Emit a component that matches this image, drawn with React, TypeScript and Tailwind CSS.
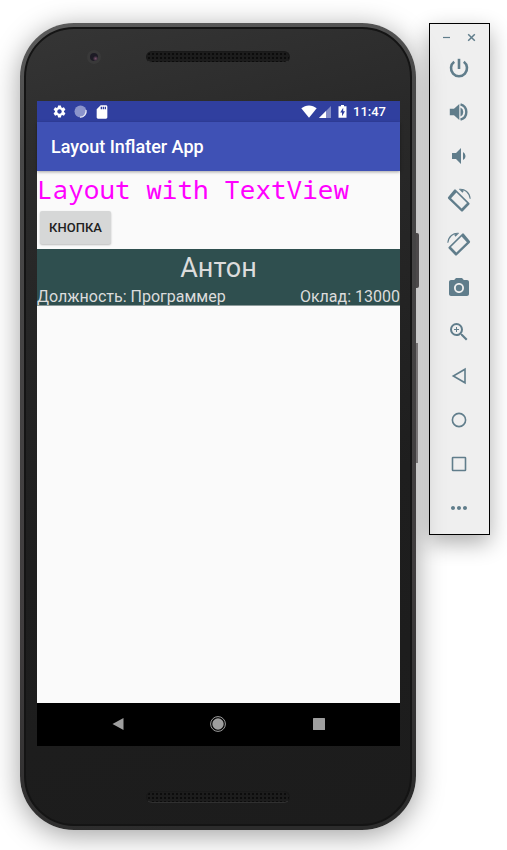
import type { ReactNode } from "react";
import {
  MdCameraAlt,
  MdMoreHoriz,
  MdSdCard,
  MdSettings,
  MdVolumeDown,
  MdZoomIn,
} from "react-icons/md";

function RotateIcon({ flipped = false }: { flipped?: boolean }) {
  return (
    <svg viewBox="0 0 24 24" className={flipped ? "size-6 -scale-x-100" : "size-6"} aria-hidden="true">
      <path
        fill="currentColor"
        fillRule="evenodd"
        d="M7.200 1.700Q8 1 8.800 1.700L22.300 15Q23 15.800 22.300 16.600L15.800 23.300Q15 24 14.200 23.300L1.200 10.700Q.5 9.900 1.200 9.100ZM9.400 4.600L4.100 10.300L14.600 20.600L20 14.900Z"
      />
      <path d="M12.300 1.300C17.800.6 22.600 4.800 23.200 10.800" fill="none" stroke="currentColor" strokeWidth="1.100" />
      <path d="M12 1.200L15.500 4.700L17 2.400Z" fill="currentColor" />
    </svg>
  );
}

function Outline({ children }: { children: ReactNode }) {
  return (
    <svg viewBox="0 0 24 24" className="size-6" fill="none" stroke="currentColor" strokeWidth="1.6" aria-hidden="true">
      {children}
    </svg>
  );
}

function PowerIcon() {
  return (
    <svg viewBox="0 0 24 24" className="size-6" fill="none" stroke="currentColor" strokeWidth="2.6" aria-hidden="true">
      <path d="M12 2.800V13" />
      <path d="M7.200 5.800A8 8 0 1 0 16.800 5.800" />
    </svg>
  );
}

function VolumeUpIcon() {
  return (
    <svg viewBox="0 0 24 24" className="size-6" aria-hidden="true">
      <path fill="currentColor" d="M2.800 8.800V15.200H7L12.300 20V4L7 8.800ZM13.500 7.500A5 5 0 0 1 13.500 16.500Z" />
      <path d="M13.500 4.300A8 8 0 0 1 13.500 19.700" fill="none" stroke="currentColor" strokeWidth="2.400" />
    </svg>
  );
}

const tools: { label: string; icon: ReactNode }[] = [
  { label: "Power", icon: <PowerIcon /> },
  { label: "Volume up", icon: <VolumeUpIcon /> },
  { label: "Volume down", icon: <MdVolumeDown className="size-6" /> },
  { label: "Rotate left", icon: <RotateIcon /> },
  { label: "Rotate right", icon: <RotateIcon flipped /> },
  { label: "Take screenshot", icon: <MdCameraAlt className="size-6" /> },
  { label: "Zoom", icon: <MdZoomIn className="size-6" /> },
  { label: "Back", icon: <Outline><path d="M18 5.200V18.800L6.300 12Z" /></Outline> },
  { label: "Home", icon: <Outline><circle cx="12" cy="12" r="6.600" /></Outline> },
  { label: "Overview", icon: <Outline><rect x="5.500" y="5.500" width="13" height="13" rx=".5" /></Outline> },
  { label: "More", icon: <MdMoreHoriz className="size-6" /> },
];

function Grille() {
  return (
    <div className="h-3 w-36 rounded-full border border-[#191919] border-b-[#303030] bg-[#1c1c1c] bg-[radial-gradient(circle,#0c0c0c_1px,transparent_1px)] bg-[size:4px_4px]" />
  );
}

function StatusBar() {
  return (
    <div className="flex h-[21px] items-center justify-between bg-[#303f9f] pr-[14px] pl-[15px] text-white">
      <div className="flex items-center gap-[6px]">
        <MdSettings className="size-[15px]" />
        <svg viewBox="0 0 15 15" className="size-[15px]" aria-hidden="true">
          <circle cx="7.500" cy="7.500" r="6" fill="#8b94cc" />
          <path d="M13 6A6 6 0 0 1 7 13.200" fill="none" stroke="#e8eaf6" strokeWidth="1.200" />
        </svg>
        <MdSdCard className="size-4" />
      </div>
      <div className="flex items-center">
        <svg viewBox="0 0 16 13" className="mr-[2px] h-[13px] w-4" fill="currentColor" aria-hidden="true">
          <path d="M.3 3.300C4.700-.6 11.300-.6 15.700 3.300L8 12.800Z" />
        </svg>
        <svg viewBox="0 0 12 12" className="mr-[7px] size-3" fill="currentColor" aria-hidden="true">
          <path d="M12 0V12H0Z" opacity=".4" />
          <path d="M7 5V12H0Z" />
        </svg>
        <svg viewBox="0 0 9 13" className="mr-[6px] h-[13px] w-[9px]" aria-hidden="true">
          <path fill="currentColor" d="M3 0H6V1.300H8.500V12.800H.5V1.300H3Z" />
          <path fill="#303f9f" d="M5.200 2.800L2.200 7.500H4V11.200L7 6.300H5.200Z" />
        </svg>
        <span className="text-[13px] leading-4 font-medium">11:47</span>
      </div>
    </div>
  );
}

function Screen() {
  return (
    <div className="mr-[10px] ml-[11px] bg-[#fafafa] font-[Roboto,sans-serif]">
      <StatusBar />
      <header className="relative flex h-[49px] items-center bg-[#3f51b5] px-[14px] shadow-[0_1px_3px_rgba(0,0,0,0.35)]">
        <h1 className="text-lg font-medium text-white">Layout Inflater App</h1>
      </header>
      <main className="min-h-[532px]">
        <p className="overflow-hidden font-['Noto_Sans_Mono','DejaVu_Sans_Mono',monospace] text-[26px] leading-9 whitespace-nowrap text-[#ff00ff]">
          Layout with TextView
        </p>
        <button
          type="button"
          className="mt-1 ml-[3px] block h-[33px] w-[71px] rounded-xs bg-[#d6d7d7] text-[13px] font-medium text-[#212121] shadow-[0_1px_2px_rgba(0,0,0,0.25)]"
        >
          КНОПКА
        </button>
        <section className="mt-[5px] h-[57px] border-b border-[#8d9b9b] bg-[#2f4f4f] text-[#dcdcdc]">
          <h2 className="text-center text-[27px] leading-[38px]">Антон</h2>
          <div className="flex justify-between text-base leading-5 whitespace-nowrap">
            <span>Должность: Программер</span>
            <span>Оклад: 13000</span>
          </div>
        </section>
      </main>
      <nav className="grid h-[43px] grid-cols-[1fr_40px_1fr] items-center bg-black pr-px pb-px text-[#9e9e9e]">
        <button type="button" aria-label="Back" className="flex justify-center">
          <svg viewBox="0 0 12 14" className="h-[14px] w-3" fill="currentColor">
            <path d="M11.500 1V13L.5 7Z" />
          </svg>
        </button>
        <button type="button" aria-label="Home" className="flex justify-center">
          <svg viewBox="0 0 16 16" className="size-4" fill="currentColor">
            <circle cx="8" cy="8" r="5.700" />
            <circle cx="8" cy="8" r="7.400" fill="none" stroke="currentColor" />
          </svg>
        </button>
        <button type="button" aria-label="Overview" className="flex justify-center">
          <svg viewBox="0 0 12 12" className="size-3" fill="currentColor">
            <rect width="12" height="12" rx=".5" />
          </svg>
        </button>
      </nav>
    </div>
  );
}

function Phone() {
  return (
    <div className="relative min-w-0 flex-1 rounded-[54px] bg-[linear-gradient(170deg,#5c5c5c,#484848_15%,#403d3e_70%,#2c2c2c_95%)] p-1 shadow-[0_5px_28px_rgba(0,0,0,0.38)]">
      <div className="absolute top-[210px] -right-[3px] h-[55px] w-[3px] rounded-r-xs bg-[#4c494a]" />
      <div className="absolute top-[320px] -right-[2px] h-[120px] w-[2px] bg-[#777475]" />
      <div className="rounded-[50px] border-2 border-[#141414] bg-[linear-gradient(165deg,#353535,#292929_20%,#1e1e1e_60%,#1c1c1c)]">
        <div className="grid h-[72px] grid-cols-[1fr_auto_1fr] items-center pb-[16px]">
          <div className="flex justify-center pl-4">
            <div className="grid size-[14px] place-items-center rounded-full bg-[#393939]">
              <div className="size-2 rounded-full bg-[radial-gradient(circle_at_70%_70%,#77526b_0,#1d1b25_35%)]" />
            </div>
          </div>
          <Grille />
        </div>
        <Screen />
        <div className="flex h-[78px] items-center justify-center pt-6">
          <Grille />
        </div>
      </div>
    </div>
  );
}

function Toolbar() {
  return (
    <aside className="w-[61px] shrink-0 border border-black bg-[#efefef] pr-px pb-1 text-[#607d8b] shadow-[0_8px_22px_rgba(0,0,0,0.32)]">
      <div className="flex h-[22px] items-center justify-center gap-4 pt-1">
        <button type="button" aria-label="Minimize" className="flex">
          <svg viewBox="0 0 9 9" className="size-[9px]" stroke="currentColor" strokeWidth="1.200">
            <path d="M1 4.500H8" />
          </svg>
        </button>
        <button type="button" aria-label="Close" className="flex">
          <svg viewBox="0 0 9 9" className="size-[9px]" stroke="currentColor" strokeWidth="1.500">
            <path d="M1.200 1.200L7.800 7.800M7.800 1.200L1.200 7.800" />
          </svg>
        </button>
      </div>
      {tools.map((tool) => (
        <button
          key={tool.label}
          type="button"
          aria-label={tool.label}
          className="flex h-11 w-full items-center justify-center"
        >
          {tool.icon}
        </button>
      ))}
    </aside>
  );
}

export default function App() {
  return (
    <div className="flex min-h-screen items-start gap-[13px] overflow-hidden bg-white pt-[23px] pr-[17px] pl-5">
      <Phone />
      <Toolbar />
    </div>
  );
}
